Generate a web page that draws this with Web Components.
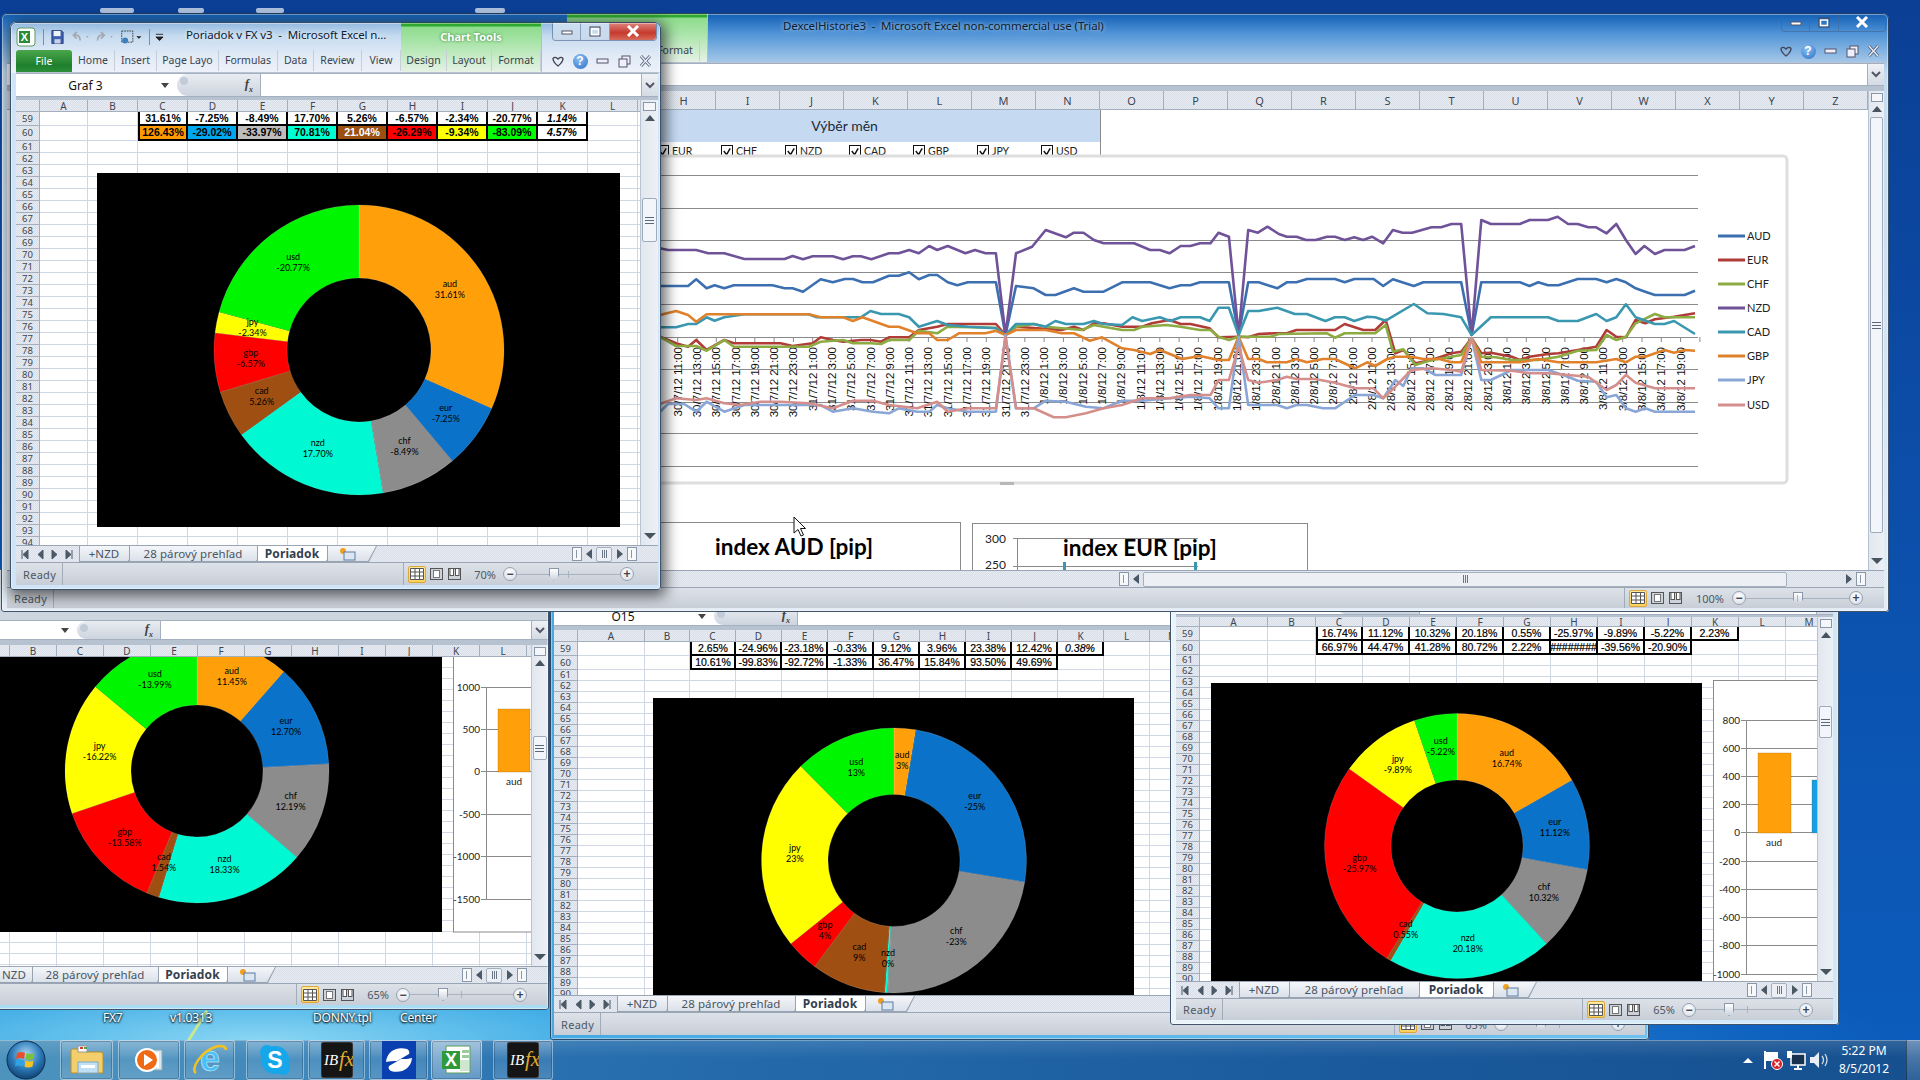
<!DOCTYPE html>
<html lang="en"><head><meta charset="utf-8"><title>Excel desktop</title>
<style>
html,body{margin:0;padding:0;width:1920px;height:1080px;overflow:hidden;background:#0b4aa4}
body{font-family:"Noto Sans","Liberation Sans",sans-serif;--dots:repeating-conic-gradient(#d9dfe9 0 25%,#e8ecf2 0 50%) 0 0/2px 2px;--line:#a4afbd}
</style></head><body>
<win-desk>
  <xl-window style="left:-6px;top:569px;width:555px;height:441px;--fl:6px;--fr:1px;--fb:5px;--frame:linear-gradient(#cdeaf8,#a9dcf4);z-index:1" rh="51" name="Poriadok">
    <xl-formula h="20" gap="5" nw="77" box=""></xl-formula>
    <xl-sheet hh="12" head="0" cols="10:,47:B,47:C,47:D,47:E,47:F,47:G,47:H,47:I,47:J,47:K,47:L,47:" rows="" rh="11" nrows="30" sw="17" spacer="65" thumb="24">
      <donut-chart style="left:0;top:12px;width:442px;height:275px" cx="197" cy="114" r="132" ri="66"
        sizes="11.45,12.70,12.19,18.33,1.54,13.58,16.22,13.99" labels="11.45%,12.70%,12.19%,18.33%,1.54%,-13.58%,-16.22%,-13.99%"></donut-chart>
      <bar-chart style="left:453px;top:12px;width:100px;height:276px" ox="453" oy="657" ax="486" end="531" lines="1000:687,500:729,0:771,-500:814,-1000:856,-1500:899" bars="498:32:709:772:#ffa00a" cat="aud:514:785"></bar-chart>
    </xl-sheet>
    <xl-tabs nav="0" widths="36,126,69,41" first="NZD" fm="-8" pr="21" thumbw="16" after="0"></xl-tabs>
    <xl-status pct="65%" thumb="33" pr="21" sh="22" noready></xl-status>
  </xl-window>

  <xl-window style="left:550px;top:555px;width:1099px;height:485px;--fl:4px;--fr:4px;--fb:5px;--frame:linear-gradient(90deg,#45a9e4,#6fc2ee);z-index:2" rh="51">
    <xl-formula h="20" gap="4" nw="160" box="O15"></xl-formula>
    <xl-sheet hh="12" head="24" cols="67:A,45:B,46:C,46:D,46:E,46:F,46:G,46:H,46:I,46:J,46:K,46:L,46:M,46:N,46:O,46:P,46:Q,46:R" rows="14,14" rh="11" nrows="32" start="59" sw="16" spacer="60" thumb="30"
      t59="2.65%,-24.96%,-23.18%,-0.33%,9.12%,3.96%,23.38%,12.42%,0.38%" t60="10.61%,-99.83%,-92.72%,-1.33%,36.47%,15.84%,93.50%,49.69%">
      <donut-chart style="left:99px;top:68px;width:481px;height:298px" cx="241" cy="162.5" r="132.5" ri="66"
        sizes="2.65,24.96,23.18,0.33,9.12,3.96,23.38,12.42" labels="3%,-25%,-23%,0%,9%,4%,23%,13%"></donut-chart>
    </xl-sheet>
    <xl-tabs nav="63" widths="50,128,70,42" pr="21" thumbw="16" after="0"></xl-tabs>
    <xl-status pct="65%" thumb="33" pr="20" sh="23"></xl-status>
  </xl-window>

  <xl-window style="left:1170px;top:544px;width:669px;height:481px;--fl:6px;--fr:6px;--fb:5px;--frame:linear-gradient(90deg,#eaf5fb,#cfe8f8);z-index:3" rh="51">
    <xl-formula h="20" gap="2" nw="160" box=""></xl-formula>
    <xl-sheet hh="10" head="24" cols="68:A,48:B,47:C,47:D,47:E,47:F,47:G,47:H,47:I,47:J,47:K,47:L,47:M" rows="14,14" rh="11" nrows="32" start="59" sw="16" spacer="63" thumb="32"
      t59="16.74%,11.12%,10.32%,20.18%,0.55%,-25.97%,-9.89%,-5.22%,2.23%" t60="66.97%,44.47%,41.28%,80.72%,2.22%,########,-39.56%,-20.90%">
      <donut-chart style="left:35px;top:66px;width:491px;height:298px" cx="246" cy="163" r="132.5" ri="66"
        sizes="16.74,11.12,10.32,20.18,0.55,25.97,9.89,5.22" labels="16.74%,11.12%,10.32%,20.18%,0.55%,-25.97%,-9.89%,-5.22%"></donut-chart>
      <bar-chart style="left:537px;top:63px;width:110px;height:320px" ox="1713" oy="680" ax="1746" end="1817" lines="800:720,600:748,400:776,200:804,0:832,-200:861,-400:889,-600:917,-800:945,-1000:974" bars="1758:33:753:833:#ffa00a,1812:8:780:833:#12a0e8" cat="aud:1774:846" box="1"></bar-chart>
    </xl-sheet>
    <xl-tabs nav="63" widths="50,130,74,36" pr="21" thumbw="16" after="0"></xl-tabs>
    <xl-status pct="65%" thumb="33" pr="20" sh="22"></xl-status>
  </xl-window>

  <xl-window style="left:1px;top:13px;width:1888px;height:599px;--fl:6px;--fr:5px;--fb:4px;--frame:linear-gradient(180deg,#0f5cb4 0,#4f93d6 20px,#c4dbf0 60px,#e4edf6 100%);z-index:4" rh="50" title="DexcelHistorie3  -  Microsoft Excel non-commercial use (Trial)" titlex="782" tabx="168" toolx="566" capr="3" main>
    <xl-formula h="23" gap="5" nw="160" box=""></xl-formula>
    <xl-sheet hh="19" head="0" nogrid cols="645:,64:H,64:I,64:J,64:K,64:L,64:M,64:N,64:O,64:P,64:Q,64:R,64:S,64:T,64:U,64:V,64:W,64:X,64:Y,64:Z" sw="16" spacer="0" thumb="416">
      <fx-picker style="left:582px;top:19px;width:512px;height:50px"></fx-picker>
      <line-chart style="left:643px;top:59px;width:1150px;height:340px"></line-chart>
      <idx-box style="left:633px;top:431px;width:321px;height:60px" label="index AUD [pip]" tx="74"></idx-box>
      <idx-box style="left:965px;top:432px;width:336px;height:60px" label="index EUR [pip]" tx="90" axis></idx-box>
    </xl-sheet>
    <xl-tabs nav="0" widths="" pr="18" thumbw="644" after="54"></xl-tabs>
    <xl-status pct="100%" thumb="52" pr="21" sh="21" wide></xl-status>
  </xl-window>

  <xl-window style="left:10px;top:22px;width:651px;height:568px;--fl:6px;--fr:3px;--fb:5px;--frame:#cfe4f6;z-index:5;box-shadow:2px 3px 14px 3px rgba(0,0,0,.6)" rh="51" title="Poriadok v FX v3  -  Microsoft Excel n..." titlex="176" tabx="0" toolx="391" capr="4" active>
    <xl-formula h="24" gap="3" nw="161" box="Graf 3"></xl-formula>
    <xl-sheet hh="12" head="24" cols="48:A,50:B,50:C,50:D,50:E,50:F,50:G,50:H,50:I,50:J,50:K,50:L,4:" rows="14,15" rh="12" nrows="36" start="59" sw="18" spacer="72" thumb="44" strong
      t59="31.61%,-7.25%,-8.49%,17.70%,5.26%,-6.57%,-2.34%,-20.77%,1.14%" t60="126.43%,-29.02%,-33.97%,70.81%,21.04%,-26.29%,-9.34%,-83.09%,4.57%"
      fills="#ff9a00,#00a6ee,#bdbdbd,#00ffd0,#9c5010,#ff0000,#ffff00,#00ff00,#fff">
      <donut-chart style="left:81px;top:73px;width:523px;height:354px" cx="262" cy="177" r="145" ri="72"
        sizes="31.61,7.25,8.49,17.70,5.26,6.57,2.34,20.77" labels="31.61%,-7.25%,-8.49%,17.70%,5.26%,-6.57%,-2.34%,-20.77%"></donut-chart>
    </xl-sheet>
    <xl-tabs nav="63" widths="50,128,70,42" pr="21" thumbw="16" after="0"></xl-tabs>
    <xl-status pct="70%" thumb="37" pr="24" sh="23"></xl-status>
  </xl-window>

  <mouse-cursor style="left:793px;top:516px;z-index:6"></mouse-cursor>
</win-desk>

<script>
const $=(h,css)=>`<style>${css}</style>${h}`;
const attr=(el,n,d='')=>el.hasAttribute(n)?el.getAttribute(n):d;
class Base extends HTMLElement{
  constructor(){super();this.attachShadow({mode:'open'})}
  connectedCallback(){if(!this._d){this._d=1;this.shadowRoot.innerHTML=this.render()}}
}
const ORB=`<svg width="42" height="42" viewBox="0 0 42 42"><defs><radialGradient id="o" cx=".5" cy=".35" r=".7"><stop offset="0" stop-color="#a9d6f3"/><stop offset=".55" stop-color="#2a79b8"/><stop offset="1" stop-color="#0d3a66"/></radialGradient></defs><circle cx="21" cy="21" r="19" fill="url(#o)" stroke="#0b2c4e"/><path d="M12 14q4-2 8 0l-1 6q-4-2-8 0z" fill="#e8502a"/><path d="M21.500 14q4 2 8 0l-1 6q-4 2-8 0z" fill="#7cc13a"/><path d="M11 21.500q4-2 8 0l-1 6q-4-2-8 0z" fill="#2ea4e4"/><path d="M20.500 21.500q4 2 8 0l-1 6q-4 2-8 0z" fill="#f6c325"/></svg>`;
const ICONS={
 folder:`<svg width="36" height="32" viewBox="0 0 36 32"><path d="M3 5h11l3 3h15a2 2 0 0 1 2 2v19H2V6z" fill="#f3cf6c" stroke="#b98d2c"/><rect x="9" y="2" width="9" height="6" fill="#fff" stroke="#999"/><rect x="11" y="3" width="3" height="2" fill="#d93a3a"/><rect x="15" y="3" width="3" height="2" fill="#4aa84a"/><rect x="9" y="18" width="20" height="11" fill="#bfe0f4" stroke="#7fa8c8"/><rect x="12" y="21" width="14" height="3" fill="#fff"/></svg>`,
 media:`<svg width="34" height="34" viewBox="0 0 34 34"><rect x="22" y="7" width="8" height="20" fill="#d7e6f2" stroke="#8aa"/><rect x="25" y="9" width="2" height="16" fill="#fff"/><circle cx="15" cy="17" r="11" fill="#ee6a14" stroke="#fff" stroke-width="2"/><path d="M12 11l9 6-9 6z" fill="#fff"/></svg>`,
 ie:`<svg width="38" height="36" viewBox="0 0 38 36"><text x="19" y="29" font-family="Liberation Sans" font-size="36" font-weight="bold" fill="#49c0f8" stroke="#e6f6ff" stroke-width=".5" text-anchor="middle">e</text><path d="M5 31C-1 27 10 10 24 5c6-2 11-1 11 3" fill="none" stroke="#f4c020" stroke-width="2.600"/></svg>`,
 skype:`<svg width="34" height="34" viewBox="0 0 34 34"><circle cx="17" cy="17" r="14" fill="#15a7ea"/><circle cx="9" cy="9" r="7" fill="#15a7ea"/><circle cx="25" cy="25" r="7" fill="#15a7ea"/><text x="17" y="25" font-family="Liberation Sans" font-size="23" font-weight="bold" fill="#fff" text-anchor="middle">S</text></svg>`,
 ibfx:`<svg width="32" height="36" viewBox="0 0 32 36"><rect width="32" height="36" rx="3" fill="#151515" stroke="#555"/><text x="3" y="23" font-family="Liberation Serif" font-style="italic" font-size="15" fill="#fff">IB</text><text x="18" y="24" font-family="Liberation Serif" font-style="italic" font-size="21" fill="#e0a92e">fx</text></svg>`,
 z:`<svg width="34" height="38" viewBox="0 0 34 38"><rect width="34" height="38" fill="#0a3fb0"/><path d="M4 21C5 10 15 5 25 8c2 1 3 3 2 5L15 20c-4 0-8 0-11 1z" fill="#fff"/><path d="M30 17C29 28 19 33 9 30c-2-1-3-3-2-5l12-7c4 0 8 0 11-1z" fill="#fff"/></svg>`,
 excel:`<svg width="34" height="34" viewBox="0 0 34 34"><path d="M6 3h24v27H6z" fill="#fff" stroke="#5c9a5c"/><path d="M20 17h9v11h-9z" fill="#cfe7cf"/><path d="M22 7h7v3h-7zM22 12h7v3h-7z" fill="#9ccb9c"/><rect x="2" y="8" width="18" height="18" fill="#2f9a3c"/><text x="11" y="23" font-family="Liberation Sans" font-weight="bold" font-size="18" fill="#fff" text-anchor="middle">X</text></svg>`
};
class WinDesk extends Base{render(){return $(`<div class="canvas">
 <i class="blob" style="left:100px;width:34px"></i><i class="blob" style="left:178px;width:26px"></i><i class="blob" style="left:256px;width:28px"></i><i class="blob" style="left:475px;width:30px"></i>
 <i class="streak"></i>
 <span class="lbl" style="left:103px">FX7</span><span class="lbl" style="left:170px">v1.0313</span><span class="lbl" style="left:313px">DONNY.tpl</span><span class="lbl" style="left:400px">Center</span>
 <slot></slot></div><task-bar></task-bar>`,
 `:host{display:flex;flex-direction:column;width:1920px;height:1080px;overflow:hidden}
 .canvas{position:relative;height:1040px;flex:none;background:radial-gradient(560px 80px at 260px 1040px,#8ad6f3,#38a8e4 70%,transparent 100%),radial-gradient(900px 120px at 1000px 1050px,#2b8fda,transparent 100%),linear-gradient(180deg,#0b3f95 0,#0c4fab 50%,#0b5cbc 100%)}
 .blob{position:absolute;top:8px;height:5px;background:#c9d6ea;border-radius:2px;opacity:.85}
 .streak{position:absolute;left:196px;top:1008px;width:3px;height:36px;background:#c8e890;transform:rotate(32deg)}
 .lbl{position:absolute;top:1009px;color:#fff;font:12px "Noto Sans",sans-serif;text-shadow:0 0 3px #000,0 1px 2px #000;letter-spacing:-.2px}`)}}
class TaskBar extends Base{render(){
 const b=[['folder',53,5],['media',62,4],['ie',51,11],['skype',58,4],['ibfx',57,4],['z',59,3],['excel',51,11,1],['ibfx',60,0]];
 return $(`<div class="orb">${ORB}</div>${b.map(x=>`<div class="btn${x[3]?' on':''}" style="width:${x[1]}px;margin-right:${x[2]}px">${ICONS[x[0]]}</div>`).join('')}
 <div class="tray"><span class="up"></span>
 <svg width="22" height="22" viewBox="0 0 22 22"><path d="M3 2v18" stroke="#fff" stroke-width="2"/><path d="M4 3h12v9H4z" fill="#fff"/><circle cx="15" cy="15" r="5.500" fill="#d8202a" stroke="#fff"/><path d="M12.500 12.500l5 5m0-5l-5 5" stroke="#fff" stroke-width="1.500"/></svg>
 <svg width="22" height="22" viewBox="0 0 22 22"><rect x="6" y="5" width="14" height="11" fill="#17324f" stroke="#fff" stroke-width="1.500"/><path d="M13 16v3M9 20h8" stroke="#fff" stroke-width="2"/><rect x="2" y="2" width="5" height="7" fill="#fff"/></svg>
 <svg width="22" height="22" viewBox="0 0 22 22"><path d="M2 8h4l5-5v16l-5-5H2z" fill="#e9eef5"/><path d="M14 7q3 4 0 8M17 5q4 6 0 12" stroke="#cfdbe8" fill="none" stroke-width="1.300"/></svg>
 </div><div class="clock"><span>5:22 PM</span><span>8/5/2012</span></div><div class="show"></div>`,
 `:host{display:flex;align-items:stretch;height:40px;flex:none;position:relative;box-shadow:inset 0 1px 0 rgba(255,255,255,.3);background:linear-gradient(180deg,rgba(255,255,255,.12),rgba(255,255,255,0) 45%),linear-gradient(90deg,#4d93bd 0,#3f88bb 16%,#276fae 30%,#1a5a9d 70%,#16508f 100%)}
 .orb{width:60px;flex:none;display:flex;align-items:center;padding-left:5px;box-sizing:border-box}
 .btn{flex:none;display:flex;align-items:center;justify-content:center;box-sizing:border-box;border:1px solid rgba(255,255,255,.33);border-radius:3px;background:linear-gradient(180deg,rgba(255,255,255,.28),rgba(255,255,255,.08) 50%,rgba(255,255,255,.16));box-shadow:inset 0 0 0 1px rgba(0,30,60,.25)}
 .btn.on{background:linear-gradient(180deg,rgba(255,255,255,.5),rgba(255,255,255,.25))}
 .tray{margin-left:auto;display:flex;align-items:center;gap:0;color:#fff}
 .tray svg{margin-right:1px}
 .up{width:0;height:0;border:5px solid transparent;border-top:0;border-bottom:5px solid #fff;margin-right:9px}
 .clock{width:60px;margin-left:3px;display:flex;flex-direction:column;align-items:center;justify-content:center;color:#fff;font:12px/18px "Noto Sans",sans-serif;white-space:nowrap}
 .show{width:13px;margin-left:12px;background:linear-gradient(180deg,rgba(255,255,255,.3),rgba(255,255,255,.1));border-left:1px solid rgba(0,0,0,.4)}`)}}
class XlWindow extends Base{render(){
 const active=this.hasAttribute('active'),main=this.hasAttribute('main'),shown=active||main;
 const tabs=[['File',56],['Home',43],['Insert',42],['Page Layo',62],['Formulas',59],['Data',36],['Review',48],['View',39],['Design',46],['Layout',45],['Format',49]];
 const rh=attr(this,'rh','51');
 return $(`<div class="frame"><div class="ribbon" style="height:${rh}px">${shown?`
  <div class="tool" style="left:${attr(this,'toolx','391')}px">${active?'<b>Chart Tools</b>':''}</div>
  <div class="ttl"><div class="qa" style="display:${active?'flex':'none'}">
    <svg width="20" height="20" viewBox="0 0 20 20"><rect x="1" y="1" width="18" height="18" rx="3" fill="#fff" stroke="#5a9a5a"/><rect x="3" y="4" width="11" height="12" fill="#2a8c38"/><text x="8.500" y="14" font-family="Liberation Sans" font-weight="bold" font-size="11" fill="#fff" text-anchor="middle">X</text></svg>
    <i class="sep"></i>
    <svg width="13" height="16" viewBox="0 0 15 17"><path d="M1 1h11l2 2v13H1z" fill="#3f5fb0" stroke="#243a80"/><rect x="3" y="1.500" width="8" height="6" fill="#eef3fa"/><rect x="4" y="11" width="7" height="5" fill="#c7d2e4"/></svg>
    <svg width="22" height="16" viewBox="0 0 26 16" style="margin-left:3px"><path d="M12 12q0-7-7-6M8 2L4 6l4 4" fill="none" stroke="#a4a8b0" stroke-width="2"/><path d="M19 7l3 0-1.500 2z" fill="#999"/></svg>
    <svg width="22" height="16" viewBox="0 0 26 16"><path d="M3 12q0-7 7-6M7 2l4 4-4 4" fill="none" stroke="#a4a8b0" stroke-width="2"/><path d="M18 7l3 0-1.500 2z" fill="#999"/></svg>
    <svg width="24" height="16" viewBox="0 0 28 18"><rect x="2" y="2" width="13" height="13" fill="none" stroke="#333" stroke-dasharray="2 1"/><circle cx="6" cy="13" r="3.500" fill="#3f7fc0"/><path d="M19 8l6 0-3 3z" fill="#222"/></svg>
    <i class="sep" style="margin:0 2px"></i><svg width="9" height="12" viewBox="0 0 10 12"><path d="M1 3h8M1 6l8 0-4 4z" stroke="#222" fill="#222"/></svg>
  </div><span class="t" style="left:${attr(this,'titlex','176')}px">${attr(this,'title')}</span>
  <div class="cap${active?' act':''}" style="margin-right:${attr(this,'capr','6')}px">
   <i class="b1"><svg width="12" height="8" viewBox="0 0 12 8"><rect x="1" y="4" width="10" height="3" fill="#fff" stroke="#556"/></svg></i>
   <i class="b2"><svg width="12" height="11" viewBox="0 0 12 11"><rect x="1" y="1" width="10" height="9" fill="none" stroke="#445" stroke-width="1"/><rect x="2.500" y="3" width="7" height="5.500" fill="none" stroke="#fff" stroke-width="1.500"/></svg></i>
   <i class="b3"><svg width="16" height="12" viewBox="0 0 16 12"><path d="M3 1l10 10M13 1L3 11" stroke="#fff" stroke-width="3"/></svg></i>
  </div></div>
  <div class="tabs" style="padding-left:${attr(this,'tabx','0')}px">${tabs.map((t,i)=>`<span class="${i?'tb':'file'}" style="width:${t[1]}px;${main&&i<10?'visibility:hidden':''}">${main&&i<10?'':t[0]}</span>`).join('')}
   <div class="rt"><svg width="12" height="11" viewBox="0 0 12 11"><path d="M1 2.500Q3 0 6 3q3-3 5-.5Q11 6 6 10 1 6 1 2.500z" fill="none" stroke="#445" stroke-width="1.300"/></svg>
   <span class="help">?</span>
   <svg width="13" height="8" viewBox="0 0 13 8"><rect x="1" y="2" width="11" height="4" fill="#eef" stroke="#556"/></svg>
   <svg width="13" height="13" viewBox="0 0 13 13"><rect x="4" y="1" width="8" height="8" fill="#eef" stroke="#556"/><rect x="1" y="4" width="8" height="8" fill="#eef" stroke="#556"/></svg>
   <svg width="13" height="12" viewBox="0 0 13 12"><path d="M2 1l9 10M11 1L2 11" stroke="#567" stroke-width="3"/><path d="M2 1l9 10M11 1L2 11" stroke="#eef" stroke-width="1.200"/></svg></div>
  </div>`:''}</div><slot></slot></div>`,
 `:host{display:block;position:absolute;box-sizing:border-box;color:#222;font:11px "Noto Sans",sans-serif;border-radius:6px 6px 3px 3px}
 .frame{height:100%;position:relative;display:flex;flex-direction:column;box-sizing:border-box;background:var(--frame);padding:0 var(--fr) var(--fb) var(--fl);border-radius:6px 6px 3px 3px;overflow:hidden}
 .frame:after{content:"";position:absolute;inset:0;border-radius:inherit;box-shadow:inset 0 0 0 1px rgba(8,30,60,.75),inset 0 0 0 2px rgba(255,255,255,.4);pointer-events:none}
 .ribbon{position:relative;flex:none;margin:0 calc(var(--fr) * -1) 0 calc(var(--fl) * -1);display:flex;flex-direction:column;background:${active?'linear-gradient(180deg,#8fb7de 0,#c6dbf0 14px,#dfe9f5 32px,#eef3fa 100%)':main?'transparent':'#cdd5df'}}
 .tool{position:absolute;top:0;bottom:1px;width:140px;background:linear-gradient(180deg,#2ea92e 0,#2ea92e 4px,#8edc8e 5px,#a8e4a8 20px,#e6f2e6 100%);text-align:center;border-right:1px solid #a9c9a9}
 .tool b{display:block;margin-top:7px;color:#fff;font-size:11px;font-weight:700;text-shadow:0 0 3px #2a7a2a}
 .ttl{flex:1;display:flex;align-items:center;position:relative;min-height:0}
 .qa{align-items:center;margin-left:6px;margin-top:2px;gap:3px}
 .sep{width:1px;height:16px;background:#7a8ea8;margin:0 4px}
 .t{position:absolute;top:5px;font-size:11.500px;white-space:pre;color:#10202f;letter-spacing:-.1px;text-shadow:0 0 4px rgba(255,255,255,.75)}
 .cap{margin-left:auto;align-self:flex-start;display:flex;height:19px;box-sizing:border-box;border:1px solid rgba(70,100,140,.6);border-top:0;border-radius:0 0 4px 4px}
 .cap i{display:flex;align-items:center;justify-content:center;height:18px;background:${main?'transparent':'linear-gradient(180deg,rgba(255,255,255,.55),rgba(190,205,225,.4))'};border-right:1px solid rgba(70,100,140,.5)}
 .b1{width:27px}.b2{width:28px}.b3{width:46px;border-right:0!important;border-radius:0 0 4px 0}
 .act .b3{background:linear-gradient(180deg,#e08a84,#c63a2e 60%,#d66a5a)}
 .tabs{flex:none;display:flex;align-items:center;position:relative;padding-bottom:1px;border-bottom:1px solid #b7c3d2;box-sizing:border-box;height:23px;margin-left:var(--fl)}
 .tb{box-sizing:border-box;flex:none;text-align:center;color:#3a4350;border-right:1px solid #c5ced9;line-height:21px;height:21px;font-size:10.500px;white-space:nowrap;overflow:hidden}
 .file{box-sizing:border-box;flex:none;text-align:center;color:#fff;height:22px;line-height:22px;background:linear-gradient(180deg,#4aa64a,#1e7f2c 70%,#2d8f3a);border-radius:3px 3px 0 0;font-size:10.500px}
 .rt{position:absolute;right:9px;top:2px;width:100px;display:flex;align-items:center;justify-content:space-between;height:18px}
 .help{width:15px;height:15px;border-radius:50%;background:radial-gradient(circle at 40% 30%,#8cc0f0,#2a6fc8);color:#fff;font:bold 12px/15px "Liberation Sans",sans-serif;text-align:center}
 ::slotted(*){flex:none}`)}}
class XlFormula extends Base{render(){const h=attr(this,'h','24'),g=attr(this,'gap','3'),nw=attr(this,'nw','160');
 return $(`<div class="bar" style="height:${h}px"><div class="name" style="width:${nw}px"><span>${attr(this,'box')}</span><i></i></div>
 <div class="pill"><em></em><span>f<sub>x</sub></span></div><div class="inp"></div><div class="chev"><svg width="10" height="7" viewBox="0 0 10 7"><path d="M1 1l4 4 4-4" fill="none" stroke="#556" stroke-width="2"/></svg></div></div>`,
 `:host{display:block;padding-bottom:${g}px;background:#b7c2d0}
 .bar{display:flex;background:#fff;border-top:1px solid #a4b0c0;border-bottom:1px solid #a4b0c0;box-sizing:border-box}
 .name{flex:none;display:flex;align-items:center;justify-content:center;position:relative;font-size:12px;color:#111;box-sizing:border-box;padding-right:22px}
 .name i{position:absolute;right:8px;top:50%;margin-top:-2px;border:4px solid transparent;border-top:5px solid #444;border-bottom:0}
 .pill{flex:none;width:84px;border-radius:14px 0 0 14px;background:linear-gradient(180deg,#e9edf2,#ccd4de);display:flex;align-items:center;justify-content:flex-end;border-right:1px solid #a4b0c0;padding-right:7px;box-sizing:border-box;position:relative;font:italic bold 13px "Liberation Serif",serif;color:#444}
 .pill em{position:absolute;left:3px;top:3px;width:8px;height:8px;border-radius:50%;background:#c2ccd8}
 .pill sub{font-size:8px}
 .inp{flex:1}
 .chev{flex:none;width:16px;background:linear-gradient(180deg,#eef1f5,#d5dbe3);border-left:1px solid #a4b0c0;display:flex;align-items:center;justify-content:center}`)}}
class XlSheet extends Base{render(){
 const cols=attr(this,'cols').split(',').map(c=>c.split(':'));
 const head=+attr(this,'head','0'),hh=attr(this,'hh','12'),rh=+attr(this,'rh','12'),n=+attr(this,'nrows','0');
 const nogrid=this.hasAttribute('nogrid'),rows=attr(this,'rows')?attr(this,'rows').split(',').map(Number):[];
 const start=+attr(this,'start','0'),t59=attr(this,'t59')?attr(this,'t59').split(','):[],t60=attr(this,'t60')?attr(this,'t60').split(','):[],fills=attr(this,'fills')?attr(this,'fills').split(','):[];
 const strong=this.hasAttribute('strong');
 let h=`${head?'<div class="ch corner"></div>':''}`+cols.map(c=>`<div class="ch">${c[1]||''}</div>`).join('');
 const heights=[];
 if(!nogrid)for(let r=0;r<n;r++){const hr=rows[r]||rh;heights.push(hr);
  if(head)h+=`<div class="rl">${start?start+r:''}</div>`;
  cols.forEach((c,i)=>{const ti=i-2;let txt='',cl='c',st='';
   const arr=r==0?t59:r==1?t60:null;
   if(arr&&ti>=0&&ti<arr.length){txt=arr[ti];cl+=' d'+(ti==0?' l':'')+(strong?' s':'');
    if(ti==8&&(strong||(t59[8]=='0.38%'&&r==0)))cl+=' it';
    if(r==1&&fills[ti]){st=`background:${fills[ti]};`;if(ti==4)st+='color:#fff;'}}
   h+=`<div class="${cl}" style="${st}">${txt}</div>`})}
 const gc=(head?head+'px ':'')+cols.map(c=>c[0]+'px').join(' ');
 const gr=hh+'px '+heights.map(x=>x+'px').join(' ');
 return $(`<div class="area"><div class="grid${nogrid?' ng':''}" style="grid-template-columns:${gc};grid-template-rows:${gr}">${h}</div><slot></slot></div>
 <xl-vscroll style="width:${attr(this,'sw','18')}px" spacer="${attr(this,'spacer')}" thumb="${attr(this,'thumb')}"></xl-vscroll>`,
 `:host{display:flex!important;flex:1 1 0!important;min-height:0;background:#fff}
 .area{flex:1;min-width:0;position:relative;overflow:hidden;background:#fff}
 .grid{display:grid;font-size:9.500px}
 .ch{background:var(--dots);border-right:1px solid var(--line);border-bottom:1px solid var(--line);display:flex;align-items:center;justify-content:center;color:#3c4550;box-sizing:border-box;font-size:10px;line-height:1;overflow:hidden}
 .ng .ch{font-size:11px}
 .rl{background:var(--dots);border-right:1px solid var(--line);border-bottom:1px solid var(--line);display:flex;align-items:center;justify-content:center;color:#3c4550;box-sizing:border-box;line-height:1;overflow:hidden}
 .c{border-right:1px solid #d0d7e5;border-bottom:1px solid #d0d7e5;box-sizing:border-box;font:10.500px/1 "Liberation Sans",sans-serif;color:#000;display:flex;align-items:center;justify-content:center;white-space:nowrap;overflow:hidden}
 .d{border-right:2px solid #000;border-bottom:2px solid #000;-webkit-text-stroke:.2px #000}
 .l{border-left:2px solid #000}
 .s{font-weight:700;-webkit-text-stroke:0}
 .it{font-style:italic}`)}}
class XlVscroll extends Base{render(){return $(`<div class="split"></div><i class="u"></i><div style="height:${attr(this,'spacer')}px;flex:none"></div><div class="th" style="height:${attr(this,'thumb')}px"><em></em><em></em><em></em></div><div style="flex:1"></div><i class="d"></i>`,
 `:host{display:flex;flex:none;flex-direction:column;align-items:center;background:linear-gradient(90deg,#e2e7ef,#edf1f6);border-left:1px solid #b9c4d2;box-sizing:border-box;height:100%}
 .split{height:9px;width:80%;border:1px solid #8a97a8;background:#f4f6f9;margin:2px 0 3px;box-sizing:border-box;position:relative}
 .u{width:0;height:0;border:5px solid transparent;border-top:0;border-bottom:6px solid #47535f;flex:none;margin-bottom:5px;margin-top:1px}
 .d{width:0;height:0;border:6px solid transparent;border-bottom:0;border-top:6px solid #47535f;flex:none;margin:0 0 6px}
 .th{flex:none;width:90%;border:1px solid #9eabba;border-radius:2px;background:#f2f5f9;box-sizing:border-box;display:flex;flex-direction:column;align-items:center;justify-content:center;gap:2px}
 .th em{display:block;width:9px;height:1px;background:#5a6878}`)}}
class XlTabs extends Base{render(){
 const w=attr(this,'widths')?attr(this,'widths').split(',').map(Number):[],nav=+attr(this,'nav','63');
 const names=[attr(this,'first','+NZD'),'28 párový prehľad','Poriadok',''];
 const tw=+attr(this,'thumbw','16'),after=attr(this,'after','0'),fm=attr(this,'fm','0');
 return $(`<div class="nav" style="width:${nav}px">${nav?`<svg width="56" height="11" viewBox="0 0 56 11"><path d="M2 1v9M8 1L3 5.500 8 10zM23 1L18 5.500 23 10zM32 1l5 4.500-5 4.500zM46 1l5 4.500-5 4.500zM52 1v9" fill="#4b5866" stroke="#4b5866"/></svg>`:''}</div>
 ${w.map((x,i)=>`<div class="tab${i==2?' on':''}" style="width:${x+8}px;${i==0?`margin-left:${fm}px`:''}"><span>${names[i]||`<svg width="18" height="14" viewBox="0 0 18 14"><circle cx="4" cy="4" r="3" fill="#f0a020"/><rect x="5" y="5" width="11" height="8" fill="#dbe6f2" stroke="#5a7ca0"/></svg>`}</span></div>`).join('')}
 <div class="sp"></div><div class="sc"><b class="sl"></b><i class="al"></i><b class="th" style="width:${tw}px"><u></u><u></u><u></u></b><span style="width:${after}px;flex:none"></span><i class="ar"></i><b class="sl"></b></div>`,
 `:host{display:flex!important;align-items:stretch;height:17px;flex:none!important;background:var(--dots);border-top:1px solid #9aa6b5;padding-right:${attr(this,'pr','20')}px;box-sizing:border-box;font-size:11.500px;color:#4a5562}
 .nav{flex:none;display:flex;align-items:center;padding-left:4px;box-sizing:border-box}
 .tab{flex:none;margin-right:-8px;background:#98a3b1;clip-path:polygon(0 0,100% 0,calc(100% - 8px) 100%,0 100%);position:relative;height:16px}
 .tab span{position:absolute;inset:0 1px 1px 1px;background:linear-gradient(180deg,#f4f6f9,#dbe1ea);clip-path:polygon(0 0,100% 0,calc(100% - 8px) 100%,0 100%);display:flex;align-items:center;justify-content:center;padding-right:8px;box-sizing:border-box;white-space:nowrap;letter-spacing:.1px}
 .tab.on span{background:#fff;font-weight:700;font-size:12px;color:#354050}
 .sp{flex:1}
 .sc{display:flex;align-items:center;gap:1px}
 .sl{display:block;width:10px;height:14px;border:1px solid #8a97a8;background:#f6f8fa;box-sizing:border-box;position:relative}
 .sl:after{content:"";position:absolute;left:3px;top:2px;bottom:2px;width:1px;background:#8a97a8}
 .al{width:12px;display:flex;justify-content:center}.al:before{content:"";border:5px solid transparent;border-left:0;border-right:6px solid #4b5866}
 .ar{width:12px;display:flex;justify-content:center}.ar:before{content:"";border:5px solid transparent;border-right:0;border-left:6px solid #4b5866}
 .th{height:15px;border:1px solid #a5b0be;border-radius:2px;background:#ecf0f5;box-sizing:border-box;display:flex;align-items:center;justify-content:center;gap:1px}
 .th u{display:block;width:1px;height:8px;background:#6a7787}`)}}
class XlStatus extends Base{render(){const wide=this.hasAttribute('wide'),nr=this.hasAttribute('noready');
 return $(`${nr?'':'<span class="rd">Ready</span><i class="s"></i>'}<span class="sp"></span><i class="s" style="margin-right:4px"></i>
 <span class="v on"><svg width="14" height="12" viewBox="0 0 14 12"><path d="M.5.500h13v11H.500zM.5 4h13M.5 8h13M5 .500v11M9.500.500v11" fill="#fff" stroke="#555"/></svg></span>
 <span class="v"><svg width="13" height="12" viewBox="0 0 13 12"><rect x=".5" y=".5" width="12" height="11" fill="#ccd2da" stroke="#555"/><rect x="3.500" y="2.500" width="6" height="7" fill="#fff" stroke="#777"/></svg></span>
 <span class="v"><svg width="13" height="12" viewBox="0 0 13 12"><rect x=".5" y=".5" width="12" height="11" fill="#ccd2da" stroke="#555"/><rect x="2" y=".5" width="3.500" height="7" fill="#fff" stroke="#555"/><rect x="7.500" y=".5" width="3.500" height="7" fill="#fff" stroke="#555"/></svg></span>
 <span class="p" style="width:${wide?38:30}px">${attr(this,'pct')}</span>
 <span class="o">−</span><span class="tr"><u style="left:${attr(this,'thumb','37')}px"></u><em></em></span><span class="o">+</span>`,
 `:host{display:flex!important;align-items:center;flex:none!important;height:${attr(this,'sh','23')}px;background:linear-gradient(180deg,#dde2e9,#c8ced7);border-top:1px solid #9aa6b5;padding-right:${attr(this,'pr','22')}px;box-sizing:border-box;font-size:11px;color:#4d5864}
 .rd{margin-left:7px;width:39px;letter-spacing:.3px}
 .s{width:1px;height:100%;background:#a2acb9;flex:none}
 .sp{flex:1}
 .v{display:flex;align-items:center;justify-content:center;width:15px;height:17px;margin-right:3px}
 .v.on{width:18px;background:linear-gradient(180deg,#ffeaa0,#fbd25a);border:1px solid #dca83a;border-radius:2px;box-sizing:border-box}
 .p{text-align:center;margin-left:5px;margin-right:3px}
 .o{width:14px;height:14px;border:1px solid #97a3b2;border-radius:50%;background:radial-gradient(circle at 50% 35%,#fff,#d5dbe3);display:block;text-align:center;font:bold 12px/13px "Liberation Sans",sans-serif;color:#3a4452;box-sizing:border-box;flex:none}
 .tr{width:103px;position:relative;height:1px;background:#a9b2bf;flex:none}
 .tr u{position:absolute;top:-6px;margin-left:-5px;width:10px;height:13px;background:linear-gradient(180deg,#fff,#cdd4dd);border:1px solid #8a97a8;box-sizing:border-box;clip-path:polygon(0 0,100% 0,100% 65%,50% 100%,0 65%)}
 .tr em{position:absolute;left:51px;top:-3px;width:1px;height:7px;background:#a9b2bf}`)}}
const COL=['#ffa00a','#0a72c8','#8c8c8c','#00f8d2','#a04f12','#ff0000','#ffff00','#00f500'];
const NAMES=['aud','eur','chf','nzd','cad','gbp','jpy','usd'];
class DonutChart extends Base{render(){
 const g=n=>+attr(this,n),cx=g('cx'),cy=g('cy'),R=g('r'),ri=g('ri');
 const v=attr(this,'sizes').split(',').map(Number),l=attr(this,'labels').split(','),tot=v.reduce((a,b)=>a+b,0);
 let a=0,p='',t='';
 const pt=(r,d)=>{const q=d*Math.PI/180;return [(cx+r*Math.sin(q)).toFixed(2),(cy-r*Math.cos(q)).toFixed(2)]};
 v.forEach((x,i)=>{const d=x/tot*360,b=a+d,lg=d>180?1:0,A=pt(R,a),B=pt(R,b),C=pt(ri,b),D=pt(ri,a),m=pt((R+ri)/2,a+d/2);
  p+=`<path d="M${A}A${R} ${R} 0 ${lg} 1 ${B}L${C}A${ri} ${ri} 0 ${lg} 0 ${D}Z" fill="${COL[i]}" stroke="rgba(255,255,255,.18)" stroke-width=".8"/>`;
  t+=`<text x="${m[0]}" y="${+m[1]-4}">${NAMES[i]}</text><text x="${m[0]}" y="${+m[1]+7}">${l[i]}</text>`;a=b});
 return $(`<svg width="100%" height="100%">${p}<g class="lb">${t}</g></svg>`,
 `:host{display:block;position:absolute;background:#000;overflow:hidden}svg{display:block}.lb text{font:9px "Lato","Liberation Sans",sans-serif;fill:#000;text-anchor:middle;-webkit-text-stroke:.15px #000}`)}}
class BarChart extends Base{render(){
 const ox=+attr(this,'ox'),oy=+attr(this,'oy'),ax=+attr(this,'ax'),end=+attr(this,'end');
 const L=attr(this,'lines').split(',').map(s=>s.split(':')),B=attr(this,'bars').split(',').map(s=>s.split(':')),c=attr(this,'cat').split(':');
 const first=+L[0][1],last=+L[L.length-1][1];
 const w=parseFloat(this.style.width),h=parseFloat(this.style.height);
 const isBox=this.hasAttribute('box');
 let s=`<rect x="${ox+.5}" y="${oy+(isBox?.5:-20)}" width="400" height="${h-1+(isBox?0:20)}" fill="#fff" stroke="#8a8a8a"/>`;
 L.forEach(l=>{s+=`<line x1="${ax-5}" x2="${end}" y1="${+l[1]+.5}" y2="${+l[1]+.5}" stroke="#8a8a8a"/><text x="${ax-6}" y="${+l[1]+4}" class="y">${l[0]}</text>`});
 s+=`<line x1="${ax+.5}" x2="${ax+.5}" y1="${first}" y2="${last}" stroke="#8a8a8a"/>`;
 B.forEach(b=>{s+=`<rect x="${b[0]}" y="${b[2]}" width="${b[1]}" height="${b[3]-b[2]}" fill="${b[4]}" stroke="rgba(120,70,0,.25)"/>`});
 s+=`<text x="${c[1]}" y="${c[2]}" class="x">${c[0]}</text>`;
 return $(`<svg width="${w}" height="${h}" viewBox="${ox} ${oy} ${w} ${h}">${s}</svg>`,
 `:host{display:block;position:absolute}svg{display:block}.y{font:10px "Lato","Liberation Sans",sans-serif;text-anchor:end;fill:#222}.x{font:10px "Lato","Liberation Sans",sans-serif;text-anchor:middle;fill:#222}`)}}
const SER={
AUD:['#3c6fb0',"0,378 35,378 45,358 58,385 68,376 80,385 92,376 140,376 155,385 165,385 178,395 200,358 215,367 230,357 240,357 252,367 265,367 285,347 297,347 310,337 322,358 335,345 345,345 358,367 370,376 383,367 418,367 430,525 443,378 465,385 480,405 492,405 515,385 527,395 552,395 575,367 610,367 634,385 648,376 660,376 672,367 708,367 720,525 732,367 745,367 768,385 780,367 792,367 805,357 840,357 852,367 864,357 888,357 900,378 912,358 938,378 950,367 997,367 1010,525 1022,367 1070,367 1082,378 1093,367 1105,376 1118,376 1142,357 1165,357 1178,367 1190,357 1202,367 1214,385 1226,395 1238,405 1275,405 1288,392"],
EUR:['#b03c38',"0,530 20,550 35,560 45,540 58,570 80,540 92,550 150,550 165,558 190,550 200,532 215,540 228,545 250,540 262,540 275,545 285,532 310,532 322,510 345,500 358,492 418,492 430,525 443,500 500,510 515,500 527,510 540,490 552,490 575,500 600,500 612,490 634,480 648,492 660,492 684,505 695,532 720,530 732,532 745,522 765,520 780,520 792,510 840,510 852,492 875,510 890,510 903,480 915,580 925,570 940,610 960,600 985,580 997,575 1010,535 1022,580 1034,578 1060,590 1070,600 1082,590 1105,582 1118,580 1142,570 1165,560 1178,510 1190,530 1202,532 1214,480 1226,490 1238,478 1262,470 1288,460"],
CHF:['#8cab42',"0,530 20,558 45,558 58,572 80,540 92,560 185,560 200,545 228,540 240,550 262,550 275,552 285,540 310,540 322,512 345,520 358,500 418,503 430,525 443,500 465,492 480,500 525,510 540,495 552,500 575,510 590,510 600,500 630,495 648,500 672,510 685,510 695,530 708,540 720,530 760,530 770,522 830,520 840,533 852,520 890,520 903,495 912,575 925,568 940,615 960,600 975,595 985,590 997,585 1010,535 1022,590 1040,592 1060,600 1093,600 1118,590 1142,572 1165,570 1178,525 1190,540 1202,530 1214,490 1238,462 1250,472 1288,472"],
NZD:['#6f5298',"0,265 10,270 45,270 60,280 80,280 105,297 155,297 165,288 178,298 190,289 215,289 228,298 240,289 250,289 263,298 285,280 297,280 310,270 322,280 335,258 345,270 358,258 380,280 392,270 405,280 418,280 430,525 443,280 463,260 480,210 505,232 515,218 527,218 540,240 552,250 590,250 610,270 622,270 634,280 648,258 660,258 672,250 685,250 695,218 708,230 720,525 732,210 744,218 756,200 770,222 780,230 792,230 804,240 816,240 830,230 840,230 852,240 864,232 875,240 886,230 900,250 912,210 924,218 936,218 960,202 972,202 985,192 997,192 1010,525 1022,180 1034,192 1070,192 1082,180 1105,180 1117,170 1130,192 1142,192 1155,202 1165,202 1178,220 1190,192 1202,240 1214,282 1225,258 1238,282 1250,270 1275,270 1288,258"],
CAD:['#3a97b0',"0,502 20,502 35,492 45,492 58,472 68,482 80,472 105,463 185,463 195,472 250,472 262,453 275,462 297,462 310,472 322,500 345,483 358,495 383,500 418,505 430,525 443,492 465,492 480,500 492,483 505,492 527,492 540,483 552,492 575,495 588,472 600,483 622,472 635,483 648,472 672,472 684,483 695,443 708,443 720,525 732,453 745,453 768,443 790,462 805,462 828,483 840,472 852,472 864,483 880,470 890,472 903,482 938,432 955,460 975,462 997,472 1010,525 1034,472 1105,472 1118,483 1142,483 1165,462 1178,483 1190,472 1202,433 1214,472 1238,492 1250,492 1262,483 1288,522"],
GBP:['#e0812c',"0,465 20,453 35,465 45,485 58,463 185,463 200,472 228,472 240,483 252,472 285,500 297,500 320,520 335,520 345,540 358,540 372,520 405,520 418,512 430,525 443,510 480,510 500,520 515,520 535,542 550,532 575,565 590,570 610,582 622,570 650,597 672,588 695,600 708,600 720,530 732,597 745,597 755,607 780,607 792,597 805,607 825,597 840,597 865,625 880,607 890,618 905,597 915,590 935,590 950,597 970,597 985,607 997,607 1010,535 1022,607 1070,607 1093,597 1118,607 1165,607 1190,597 1202,607 1214,590 1226,590 1250,570 1262,578 1275,570 1288,572"],
JPY:['#8aa6d6',"0,755 10,732 30,732 45,755 58,725 80,755 105,735 200,735 215,755 240,745 265,755 285,760 297,745 320,755 335,755 345,735 358,745 383,755 418,755 430,525 443,745 465,745 480,722 505,725 530,740 552,745 575,722 600,722 634,715 660,710 684,715 695,745 708,745 720,530 732,735 745,735 768,735 780,745 792,735 805,735 825,745 840,745 865,705 888,705 900,715 915,660 925,678 935,625 950,625 965,645 997,645 1010,535 1022,660 1034,660 1060,630 1105,630 1130,650 1142,662 1165,665 1178,712 1190,705 1202,745 1214,755 1226,745 1238,755 1288,755"],
USD:['#d48f8d',"0,732 20,715 45,720 58,715 80,730 100,735 125,725 150,725 185,730 215,745 240,722 265,722 285,735 320,745 345,725 358,755 383,745 418,745 430,530 443,745 465,745 490,772 505,772 530,760 552,745 575,735 600,715 634,715 660,705 685,705 695,660 708,660 720,560 732,660 745,668 768,660 780,650 792,657 815,657 840,668 865,685 888,685 900,715 915,680 935,630 960,625 985,630 997,635 1010,535 1022,630 1060,632 1082,640 1105,640 1130,645 1155,650 1178,690 1190,675 1202,645 1214,668 1238,685 1288,685"]};
class LineChart extends Base{render(){
 const X=x=>+(660+x*.8036).toFixed(1),Y=y=>+(160+y/3).toFixed(1);
 let s=`<rect x="652" y="156" width="1135" height="327" rx="4" fill="#fff" stroke="#dedede" stroke-width="3"/><rect x="1000" y="482" width="14" height="3" fill="#b8b8b8"/>`;
 [175,208,240,272,304,369,402,433,466].forEach(y=>s+=`<line x1="650" x2="1698" y1="${y+.5}" y2="${y+.5}" stroke="#8b8b8b"/>`);
 s+=`<line x1="650" x2="1698" y1="337.5" y2="337.5" stroke="#8b8b8b"/>`;
 for(let i=0;i<54;i++){const x=X(22+i*24);s+=`<line x1="${x}" x2="${x}" y1="337" y2="342" stroke="#8b8b8b"/>`}
 const days=[['30/7/12',[11,13,15,17,19,21,23]],['31/7/12',[1,3,5,7,9,11,13,15,17,19,21,23]],['1/8/12',[1,3,5,7,9,11,13,15,17,19,21,23]],['2/8/12',[1,3,5,7,9,11,13,15,17,19,21,23]],['3/8/12',[1,3,5,7,9,11,13,15,17,19]]];
 let k=0;days.forEach(d=>d[1].forEach(h=>{const x=X(22+k*24)+4;s+=`<text class="d" transform="translate(${x} 347) rotate(-90)">${d[0]} ${h}:00</text>`;k++}));
 Object.keys(SER).forEach(n=>{const p=SER[n][1].split(' ').map(q=>{const a=q.split(',');return X(+a[0])+','+Y(+a[1])}).join(' ');
  s+=`<polyline points="${p}" fill="none" stroke="${SER[n][0]}" stroke-width="2.600" stroke-linejoin="round"/>`});
 Object.keys(SER).forEach((n,i)=>{const y=[236,260,284,308,332,356,380,405][i];s+=`<line x1="1718" x2="1745" y1="${y}" y2="${y}" stroke="${SER[n][0]}" stroke-width="3"/><text class="l" x="1747" y="${y+4}">${n}</text>`});
 return $(`<svg width="1150" height="340" viewBox="650 150 1150 340">${s}</svg>`,
 `:host{display:block;position:absolute}svg{display:block}.d{font:11.500px "Liberation Sans",sans-serif;text-anchor:end;fill:#111}.l{font:11px "Lato","Liberation Sans",sans-serif;fill:#222}`)}}
class FxPicker extends Base{render(){
 const n=['AUD','EUR','CHF','NZD','CAD','GBP','JPY','USD'];
 return $(`<div class="h">Výběr měn</div><div class="r">${n.map(x=>`<span><i><svg width="11" height="11" viewBox="0 0 11 11"><path d="M2 5l3 4 4-7" fill="none" stroke="#111" stroke-width="1.600"/></svg></i>${x}</span>`).join('')}</div>`,
 `:host{display:block;position:absolute;border-right:1px solid #8a8a8a;box-sizing:border-box;font-family:"Lato","Liberation Sans",sans-serif}
 .h{height:32px;background:#c5d9f1;display:flex;align-items:center;justify-content:center;font-size:14px;color:#1c2a3a;padding-bottom:2px;box-sizing:border-box}
 .r{display:flex;padding-left:4px;height:18px;align-items:center;font-size:10.500px;color:#222}
 .r span{display:flex;align-items:center;width:64px;flex:none;gap:3px}
 i{display:flex;width:12px;height:12px;border:1px solid #111;background:#fff;box-sizing:border-box;align-items:center;justify-content:center}`)}}
class IdxBox extends Base{render(){const ax=this.hasAttribute('axis');
 return $(`${ax?`<span class="n" style="top:8px">300</span><span class="n" style="top:34px">250</span><i class="g" style="top:14px"></i><i class="g" style="top:42px"></i><i class="v"></i><i class="m" style="left:90px"></i><i class="m" style="left:221px"></i>`:''}<b style="left:${attr(this,'tx')}px">${attr(this,'label')}</b>`,
 `:host{display:block;position:absolute;background:#fff;border:1px solid #8a8a8a;box-sizing:border-box;font-family:"Lato","Liberation Sans",sans-serif;overflow:hidden}
 b{position:absolute;top:9px;font-size:22.500px;line-height:30px;color:#000;white-space:nowrap;z-index:1}
 .n{position:absolute;left:12px;font-size:12px;line-height:14px;color:#222}
 .g{position:absolute;left:40px;width:185px;height:1px;background:#8a8a8a}
 .v{position:absolute;left:44px;top:14px;width:1px;height:46px;background:#8a8a8a}
 .m{position:absolute;top:38px;width:3px;height:10px;background:#3a97b0}`)}}
class MouseCursor extends Base{render(){return $(`<svg width="14" height="21" viewBox="0 0 14 21"><path d="M1 1v16l4-3.500 3 6.500 2.500-1-3-6.500h5z" fill="#fff" stroke="#111" stroke-width="1"/></svg>`,`:host{display:block;position:absolute}svg{display:block}`)}}
[['win-desk',WinDesk],['task-bar',TaskBar],['xl-window',XlWindow],['xl-formula',XlFormula],['xl-sheet',XlSheet],['xl-vscroll',XlVscroll],['xl-tabs',XlTabs],['xl-status',XlStatus],['donut-chart',DonutChart],['bar-chart',BarChart],['line-chart',LineChart],['fx-picker',FxPicker],['idx-box',IdxBox],['mouse-cursor',MouseCursor]].forEach(d=>customElements.define(d[0],d[1]));
</script>
</body></html>
